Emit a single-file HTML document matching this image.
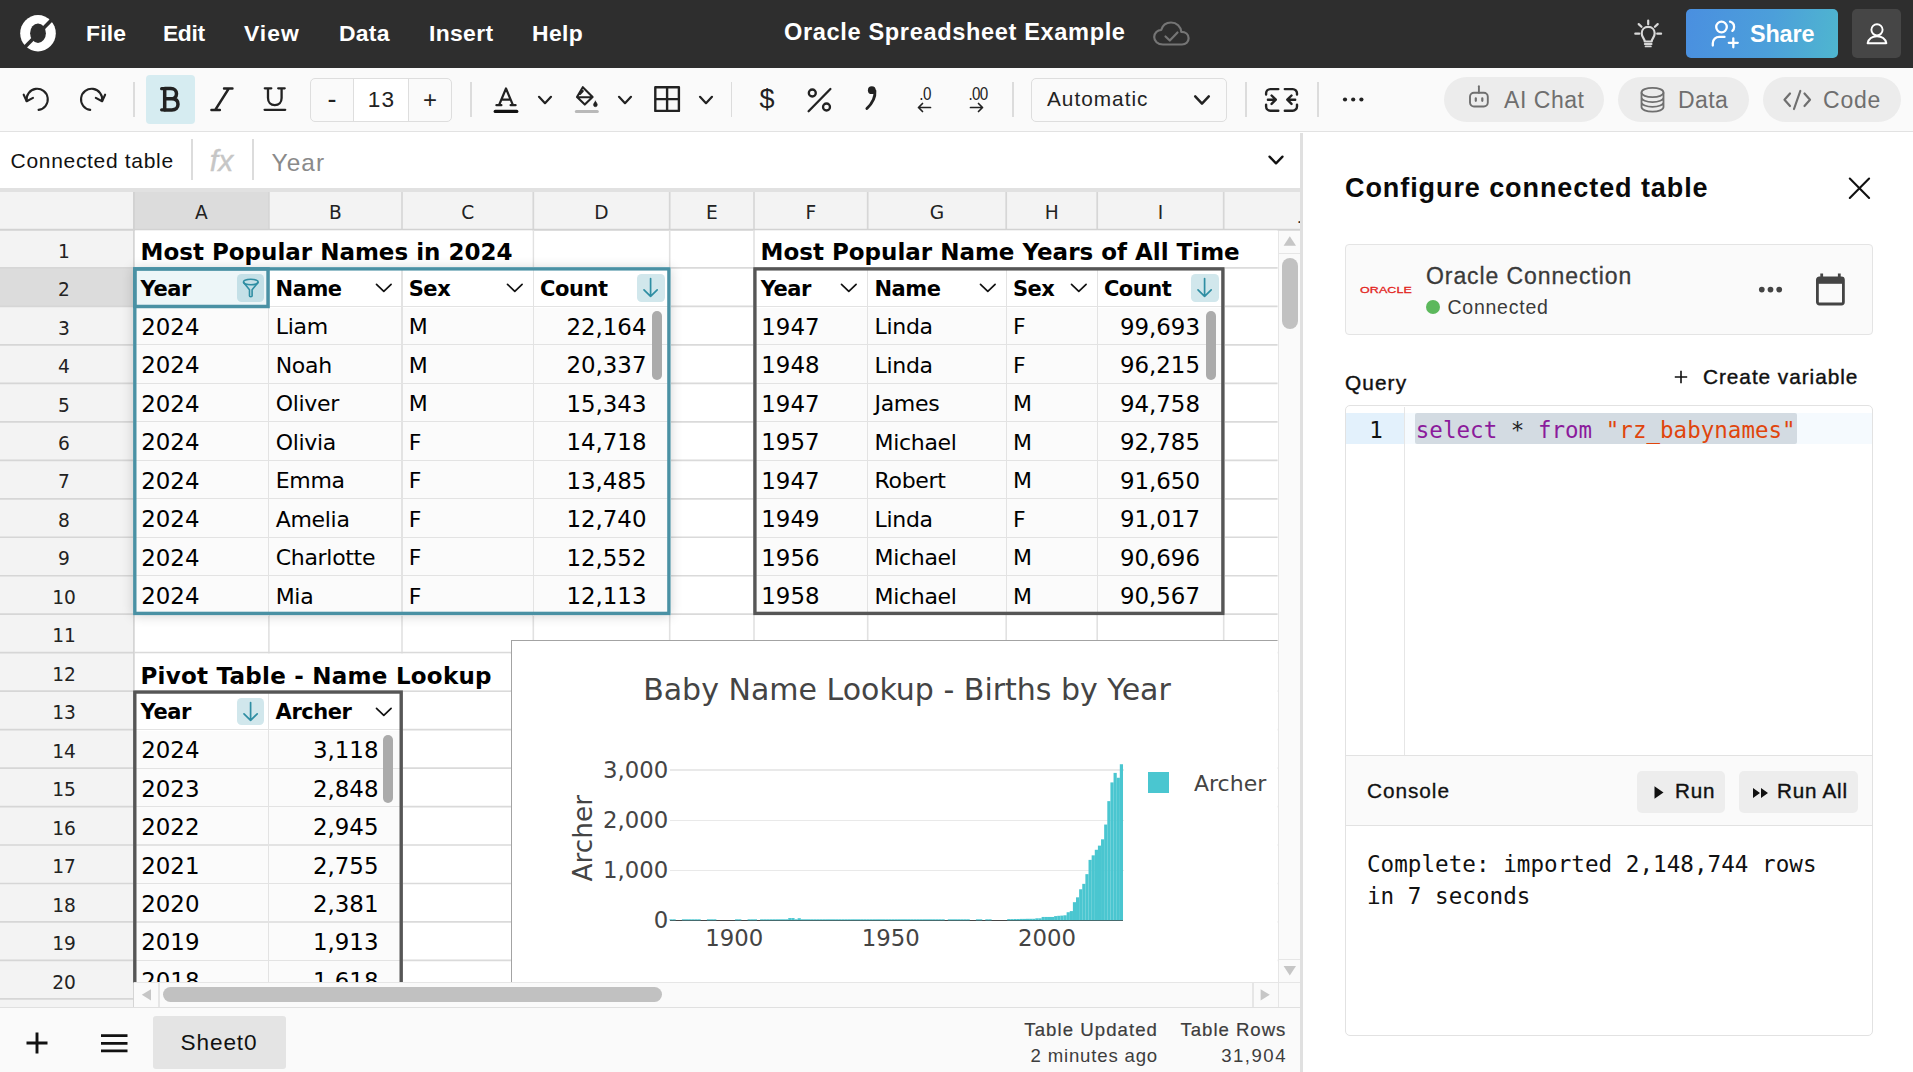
<!DOCTYPE html>
<html lang="en"><head><meta charset="utf-8"><title>Oracle Spreadsheet Example</title>
<style>
*{box-sizing:border-box;margin:0;padding:0}
html,body{width:1913px;height:1072px;overflow:hidden;background:#fff}
body{font-family:"DejaVu Sans","Liberation Sans",sans-serif;color:#111;position:relative}
.abs{position:absolute}
.t{position:absolute;white-space:pre;line-height:1}
svg{position:absolute;overflow:visible}
#topbar{position:absolute;left:0;top:0;width:1913px;height:68px;background:#2e2e2e}
#toolbar{position:absolute;left:0;top:68px;width:1913px;height:64px;background:#fafafa;border-bottom:1.5px solid #e2e2e2}
.menu{position:absolute;top:0;height:68px;line-height:66px;color:#fff;font-weight:700;font-size:19.2px}
.sep{position:absolute;top:14px;width:1.5px;height:35px;background:#dcdcdc}
.pill{position:absolute;top:9px;height:45px;border-radius:23px;background:#ececec;color:#6f6f6f;font-size:21px;line-height:45px}

</style></head><body>
<div id="topbar"><svg style="left:19.5px;top:14.5px;" width="36" height="36.5" viewBox="0 0 36 36.5" fill="none"><ellipse cx="18" cy="18.25" rx="17.8" ry="18.2" fill="#fff"/><ellipse cx="18" cy="18.2" rx="7.9" ry="9.7" fill="#2e2e2e"/><path d="M4.5 32.5 L31.5 5" stroke="#2e2e2e" stroke-width="3.6"/></svg><div class="t" style="left:86px;top:21.85px;font-family:'Liberation Sans','DejaVu Sans',sans-serif;font-size:22.9px;font-weight:700;color:#fff;letter-spacing:0.15px;">File</div><div class="t" style="left:163px;top:21.85px;font-family:'Liberation Sans','DejaVu Sans',sans-serif;font-size:22.9px;font-weight:700;color:#fff;letter-spacing:-0.4px;">Edit</div><div class="t" style="left:244px;top:21.85px;font-family:'Liberation Sans','DejaVu Sans',sans-serif;font-size:22.9px;font-weight:700;color:#fff;letter-spacing:1.0px;">View</div><div class="t" style="left:339px;top:21.85px;font-family:'Liberation Sans','DejaVu Sans',sans-serif;font-size:22.9px;font-weight:700;color:#fff;letter-spacing:0.25px;">Data</div><div class="t" style="left:429px;top:21.85px;font-family:'Liberation Sans','DejaVu Sans',sans-serif;font-size:22.9px;font-weight:700;color:#fff;letter-spacing:0.35px;">Insert</div><div class="t" style="left:532px;top:21.85px;font-family:'Liberation Sans','DejaVu Sans',sans-serif;font-size:22.9px;font-weight:700;color:#fff;letter-spacing:0.4px;">Help</div><div class="t" style="left:784px;top:21.40px;font-family:'Liberation Sans','DejaVu Sans',sans-serif;font-size:23.6px;font-weight:700;color:#fff;letter-spacing:0.63px;">Oracle Spreadsheet Example</div><svg style="left:1152px;top:20px;" width="40" height="28" viewBox="0 0 40 28" fill="none"><path d="M11 24.5 C5.5 24.5 2.2 21 2.2 17 C2.2 12.8 5.5 10 9.2 10 C10.5 5.5 14.3 2.5 19 2.5 C24.8 2.5 28.8 6.6 29.3 11.8 C33.5 11.8 36.6 14.4 36.6 18.2 C36.6 21.8 33.8 24.5 30 24.5 Z" stroke="#757575" stroke-width="2.2" stroke-linejoin="round"/><path d="M13.5 16.5 L17.8 20.5 L25.5 12.5" stroke="#757575" stroke-width="2.2" stroke-linecap="round" stroke-linejoin="round"/></svg><svg style="left:1632px;top:18px;" width="32" height="32" viewBox="0 0 32 32" fill="none"><g stroke="#d9d9d9" stroke-width="2.2" stroke-linecap="round" fill="none"><path d="M16.200 2.500v3.700M3.300 15.700h3.900M25.200 15.700h3.900M6.700 6.100l2.800 2.700M25.700 6.100l-2.800 2.700"/><path d="M12.700 23.500C12.700 20.500 9.700 19.400 9.700 15.300C9.700 11.500 12.500 8.900 16.200 8.900C19.900 8.900 22.700 11.500 22.700 15.300C22.700 19.400 19.700 20.500 19.700 23.500Z" stroke-linejoin="round"/><path d="M12.800 26h6.800M13.600 28.400h5.200" stroke-width="1.900"/></g></svg><div class="abs" style="left:1686px;top:9px;width:152px;height:49px;border-radius:5px;background:linear-gradient(100deg,#4a8fe0 0%,#4c9fda 55%,#4fb6cf 100%)"></div><svg style="left:1711px;top:19px;" width="30" height="30" viewBox="0 0 30 30" fill="none"><g stroke="#fff" stroke-width="2.3" stroke-linecap="round" fill="none"><circle cx="10.5" cy="8" r="5.3"/><path d="M1.8 26.5v-2.3c0-3.8 3-6.3 6.5-6.3h5.2"/><path d="M19 2.6c2.6.7 4.1 2.8 4.1 5.3 0 1.6-.6 3-1.7 4"/><path d="M22.3 19.3v9M17.8 23.8h9"/></g></svg><div class="t" style="left:1750px;top:22.50px;font-family:'Liberation Sans','DejaVu Sans',sans-serif;font-size:23.4px;font-weight:700;color:#fff;letter-spacing:-0.15px;">Share</div><div class="abs" style="left:1852px;top:9px;width:49px;height:49px;border-radius:5px;background:#464646"></div><svg style="left:1864px;top:21px;" width="26" height="26" viewBox="0 0 26 26" fill="none"><g stroke="#fff" stroke-width="1.9" fill="none" stroke-linejoin="round"><circle cx="13" cy="8.8" r="5.6"/><path d="M3.6 22.2c1.2-4.6 4.8-6.9 9.4-6.9s8.2 2.3 9.4 6.9z"/></g></svg></div><div id="toolbar"><svg style="left:0px;top:0px;" width="320" height="64" viewBox="0 0 320 64" fill="none"><g  stroke="#222" stroke-width="2.1" stroke-linecap="round" stroke-linejoin="round" fill="none"><path d="M26.7 33.0 A10.6 10.6 0 1 1 38.6 41.9"/><path d="M23.7 26.700000000000003 L26.7 33.2 L33.0 29.900000000000002"/></g><g transform="translate(183.6 0) scale(-1 1)" stroke="#222" stroke-width="2.1" stroke-linecap="round" stroke-linejoin="round" fill="none"><path d="M81.5 33.0 A10.6 10.6 0 1 1 93.39999999999999 41.9"/><path d="M78.5 26.700000000000003 L81.5 33.2 L87.8 29.900000000000002"/></g></svg><div class="sep" style="left:133px"></div><div class="abs" style="left:146px;top:7px;width:49px;height:49px;border-radius:4px;background:#d6ecf1"></div><svg style="left:0px;top:0px;" width="320" height="64" viewBox="0 0 320 64" fill="none"><g stroke="#222" stroke-linecap="round" stroke-linejoin="round" fill="none">
<path d="M161.6 20.7h3.2M161.600 41.800h3.200" stroke-width="3.2"/>
<path d="M164.7 20.6v21.3M164.7 20.6h6.2c3.4 0 5.6 2 5.6 5.1s-2.2 5.1-5.6 5.1h-6.2M170.9 30.8h1c3.8 0 6.1 2.1 6.1 5.5s-2.3 5.6-6.1 5.6h-7.2" stroke-width="3.5"/>
<path d="M224 20.5h8.5M211.4 42h8.5M228.8 20.5L215.2 42" stroke-width="2.4"/>
<path d="M264.8 20.3h6.5M278.2 20.3h6.5M268 20.3v9.8c0 4.4 2.7 7 6.8 7s6.8-2.6 6.8-7v-9.8M264.6 41.8h20.6" stroke-width="2.3"/>
</g></svg><div class="abs" style="left:310px;top:9.5px;width:142px;height:44.5px;border:1.3px solid #dedede;border-radius:5px;background:#fafafa"></div><div class="abs" style="left:353px;top:10.5px;width:56px;height:42.5px;background:#fff;border-left:1.3px solid #dedede;border-right:1.3px solid #dedede"></div><div class="t" style="left:-68px;width:800px;text-align:center;top:18.10px;font-family:'Liberation Sans','DejaVu Sans',sans-serif;font-size:27px;font-weight:400;color:#222;letter-spacing:0px;">-</div><div class="t" style="left:-18.5px;width:800px;text-align:center;top:20.50px;font-family:'Liberation Sans','DejaVu Sans',sans-serif;font-size:22.6px;font-weight:400;color:#222;letter-spacing:1.3px;">13</div><div class="t" style="left:30px;width:800px;text-align:center;top:20.00px;font-family:'Liberation Sans','DejaVu Sans',sans-serif;font-size:24px;font-weight:400;color:#222;letter-spacing:0px;">+</div><div class="sep" style="left:470px"></div><svg style="left:490px;top:14px;" width="34" height="40" viewBox="0 0 34 40" fill="none"><path d="M9 23.2 L16 6.5 L23 23.2 M11.7 17.6h8.6 M6.4 23.2h5 M20.6 23.2h5" stroke="#222" stroke-width="2.2" stroke-linecap="round" stroke-linejoin="round"/><path d="M5.2 29.4h21.6" stroke="#111" stroke-width="3.2" stroke-linecap="round"/></svg><svg style="left:534.8px;top:21.6px;" width="20" height="20" viewBox="0 0 20 20" fill="none"><path d="M4 6.8 L10 13.2 L16 6.8" stroke="#222" stroke-width="2.2" stroke-linecap="round" stroke-linejoin="round"/></svg><svg style="left:570px;top:14px;" width="34" height="40" viewBox="0 0 34 40" fill="none"><g stroke="#222" stroke-width="2.1" stroke-linejoin="round" stroke-linecap="round"><path d="M12.8 5.2 L22.6 15 L14.8 22.6 L7 15 Z M10 11.9 L12.8 9 M7.4 15.2h15"/><path d="M25.4 19.2c1.2 1.6 1.9 2.7 1.9 3.6a1.9 1.9 0 0 1-3.8 0c0-.9.7-2 1.9-3.6z" fill="#222" stroke-width="0.6"/></g><path d="M6.3 29.4h21" stroke="#b9b9b9" stroke-width="3" stroke-linecap="round"/></svg><svg style="left:615px;top:21.6px;" width="20" height="20" viewBox="0 0 20 20" fill="none"><path d="M4 6.8 L10 13.2 L16 6.8" stroke="#222" stroke-width="2.2" stroke-linecap="round" stroke-linejoin="round"/></svg><svg style="left:654px;top:18px;" width="27" height="27" viewBox="0 0 27 27" fill="none"><path d="M1.3 1.3h23.6v23.6H1.3z M13.1 1.3v23.6 M1.3 13.1h23.6" stroke="#222" stroke-width="2.4" stroke-linejoin="round"/></svg><svg style="left:696px;top:21.6px;" width="20" height="20" viewBox="0 0 20 20" fill="none"><path d="M4 6.8 L10 13.2 L16 6.8" stroke="#222" stroke-width="2.2" stroke-linecap="round" stroke-linejoin="round"/></svg><div class="sep" style="left:730.5px"></div><div class="t" style="left:367px;width:800px;text-align:center;top:18.10px;font-family:'Liberation Sans','DejaVu Sans',sans-serif;font-size:27px;font-weight:400;color:#222;letter-spacing:0px;">$</div><svg style="left:805px;top:17px;" width="30" height="30" viewBox="0 0 30 30" fill="none"><g stroke="#222" stroke-width="2.3" stroke-linecap="round" fill="none"><circle cx="7.3" cy="8" r="3.5"/><circle cx="21.5" cy="22" r="3.5"/><path d="M3.6 26.2 L25.4 4"/></g></svg><svg style="left:860px;top:16px;" width="24" height="32" viewBox="0 0 24 32" fill="none"><circle cx="11.800" cy="6.200" r="3.900" fill="#222"/><path d="M14.900 7c.6 6.500-2.600 12.300-8 17.500" stroke="#222" stroke-width="2.900" stroke-linecap="round" fill="none"/></svg><div class="t" style="left:524.5px;width:800px;text-align:center;top:15.50px;font-family:'Liberation Sans','DejaVu Sans',sans-serif;font-size:19px;font-weight:400;color:#222;letter-spacing:-0.8px;transform:scaleX(.8)">.0</div><div class="t" style="left:577.5px;width:800px;text-align:center;top:15.50px;font-family:'Liberation Sans','DejaVu Sans',sans-serif;font-size:19px;font-weight:400;color:#222;letter-spacing:-0.8px;transform:scaleX(.8)">.00</div><svg style="left:900px;top:30px;" width="100" height="20" viewBox="0 0 100 20" fill="none"><g stroke="#222" stroke-width="1.7" stroke-linecap="round" stroke-linejoin="round"><path d="M30.5 9.5h-12M22.5 5.5l-4 4 4 4"/><path d="M70.5 9.5h12M78.5 5.5l4 4-4 4"/></g></svg><div class="sep" style="left:1012px"></div><div class="abs" style="left:1031px;top:10px;width:196px;height:44px;border:1.3px solid #dedede;border-radius:5px;background:#fafafa"></div><div class="t" style="left:1047px;top:21.20px;font-family:'Liberation Sans','DejaVu Sans',sans-serif;font-size:20.8px;font-weight:400;color:#222;letter-spacing:1.0px;">Automatic</div><svg style="left:1191.5px;top:21.8px;" width="20" height="20" viewBox="0 0 20 20" fill="none"><path d="M3.2 6.4 L10 13.6 L16.8 6.4" stroke="#222" stroke-width="2.5" stroke-linecap="round" stroke-linejoin="round"/></svg><div class="sep" style="left:1245px"></div><svg style="left:1264px;top:18px;" width="36" height="28" viewBox="0 0 36 28" fill="none"><g stroke="#222" stroke-width="2.4" stroke-linecap="round" stroke-linejoin="round"><path d="M14.3 3.1H6.3a4.200 4.200 0 0 0-4.200 4.200V8.600M2.100 18.600V20.500a4.200 4.200 0 0 0 4.200 4.200H14.300M20.800 3.100H28.800a4.200 4.200 0 0 1 4.200 4.200V8.600M33 18.600V20.500a4.200 4.200 0 0 1-4.200 4.200H20.800"/><path d="M3.900 13.700H11.400M7.600 9.500l4.200 4.200-4.200 4.200M31.200 13.700H23.700M27.500 9.500l-4.200 4.200 4.200 4.200"/></g></svg><div class="sep" style="left:1317px"></div><svg style="left:1340px;top:27px;" width="28" height="10" viewBox="0 0 28 10" fill="none"><circle cx="5" cy="4.5" r="2.1" fill="#222"/><circle cx="13.2" cy="4.5" r="2.1" fill="#222"/><circle cx="21.4" cy="4.500" r="2.1" fill="#222"/></svg><div class="pill" style="left:1444px;width:160px"></div><svg style="left:1466px;top:15px;" width="28" height="28" viewBox="0 0 28 28" fill="none"><g stroke="#6f6f6f" stroke-width="1.9" stroke-linecap="round" fill="none"><rect x="4" y="9.800" width="17.800" height="13.700" rx="4"/><path d="M12.900 9.800V3.300"/><path d="M9.800 15.300v2.500M16.300 15.300v2.500" stroke-width="2.200"/></g></svg><div class="t" style="left:1504px;top:21.30px;font-family:'Liberation Sans','DejaVu Sans',sans-serif;font-size:23px;font-weight:400;color:#6f6f6f;letter-spacing:0.55px;">AI Chat</div><div class="pill" style="left:1618px;width:131px"></div><svg style="left:1640px;top:18px;" width="26" height="28" viewBox="0 0 26 28" fill="none"><g stroke="#6f6f6f" stroke-width="1.8" fill="none"><ellipse cx="12.500" cy="6.500" rx="11" ry="4.700"/><path d="M1.500 6.500v14.500c0 2.600 4.900 4.700 11 4.700s11-2.100 11-4.700V6.500M1.500 11.400c0 2.600 4.900 4.700 11 4.700s11-2.100 11-4.700M1.500 16.200c0 2.600 4.900 4.700 11 4.700s11-2.100 11-4.700"/></g></svg><div class="t" style="left:1678px;top:21.30px;font-family:'Liberation Sans','DejaVu Sans',sans-serif;font-size:23px;font-weight:400;color:#6f6f6f;letter-spacing:0.4px;">Data</div><div class="pill" style="left:1763px;width:138px"></div><svg style="left:1782px;top:20px;" width="32" height="24" viewBox="0 0 32 24" fill="none"><g stroke="#6f6f6f" stroke-width="2.2" stroke-linecap="round" stroke-linejoin="round" fill="none"><path d="M8 5.500L2.500 11.800 8 18M22.500 5.500l5.500 6.300-5.500 6.200M18.300 3L12 21"/></g></svg><div class="t" style="left:1823px;top:21.30px;font-family:'Liberation Sans','DejaVu Sans',sans-serif;font-size:23px;font-weight:400;color:#6f6f6f;letter-spacing:0.8px;">Code</div></div><div class="abs" style="left:0;top:132px;width:1300px;height:56px;background:#fff"></div><div class="t" style="left:10.6px;top:150.10px;font-family:'Liberation Sans','DejaVu Sans',sans-serif;font-size:21px;font-weight:400;color:#111;letter-spacing:0.68px;">Connected table</div><div class="abs" style="left:191px;top:139px;width:1.5px;height:41px;background:#dcdcdc"></div><div class="abs" style="left:252px;top:139px;width:1.5px;height:41px;background:#dcdcdc"></div><div class="t" style="left:-178.5px;width:800px;text-align:center;top:145.80px;font-family:'Liberation Sans','DejaVu Sans',sans-serif;font-size:30px;font-weight:400;color:#c6c6c6;letter-spacing:0px;font-style:italic;-webkit-text-stroke:0.4px #c6c6c6"><i>f</i>x</div><div class="t" style="left:271.6px;top:150.60px;font-family:'Liberation Sans','DejaVu Sans',sans-serif;font-size:24.4px;font-weight:400;color:#8a8a8a;letter-spacing:1.05px;">Year</div><svg style="left:1265.5px;top:150.3px;" width="20" height="20" viewBox="0 0 20 20" fill="none"><path d="M3.5 6.6 L10 13.4 L16.5 6.6" stroke="#111" stroke-width="2.3" stroke-linecap="round" stroke-linejoin="round"/></svg><div class="abs" style="left:0;top:187.6px;width:1300px;height:4.4px;background:#e1e1e1"></div><div class="abs" style="left:0;top:192px;width:1300px;height:38px;background:#f3f3f3"></div><div class="abs" style="left:0;top:230px;width:134px;height:777px;background:#f3f3f3"></div><svg style="left:0;top:0" width="1300" height="1007" viewBox="0 0 1300 1007"><rect x="133.90" y="192" width="135.00" height="37.5" fill="#dcdcdc"/><rect x="0" y="267.97" width="133.9" height="38.47" fill="#dcdcdc"/><path d="M133.90 192V230M268.90 192V230M402.00 192V230M533.30 192V230M669.70 192V230M754.00 192V230M867.70 192V230M1006.20 192V230M1097.20 192V230M1223.70 192V230M0 267.97H134M0 306.44H134M0 344.91H134M0 383.38H134M0 421.85H134M0 460.32H134M0 498.79H134M0 537.26H134M0 575.73H134M0 614.20H134M0 652.67H134M0 691.14H134M0 729.61H134M0 768.08H134M0 806.55H134M0 845.02H134M0 883.49H134M0 921.96H134M0 960.43H134M0 998.90H134" stroke="#d6d6d6" stroke-width="1.7" fill="none"/><path d="M0 229.7H1300" stroke="#d2d2d2" stroke-width="1.9" fill="none"/><path d="M133.9 192V1007" stroke="#d2d2d2" stroke-width="1.6" fill="none"/></svg><div class="t" style="left:-198.60000000000002px;width:800px;text-align:center;top:203.80px;font-family:'DejaVu Sans','Liberation Sans',sans-serif;font-size:18.6px;font-weight:400;color:#222;letter-spacing:0px;">A</div><div class="t" style="left:-64.55000000000001px;width:800px;text-align:center;top:203.80px;font-family:'DejaVu Sans','Liberation Sans',sans-serif;font-size:18.6px;font-weight:400;color:#222;letter-spacing:0px;">B</div><div class="t" style="left:67.64999999999998px;width:800px;text-align:center;top:203.80px;font-family:'DejaVu Sans','Liberation Sans',sans-serif;font-size:18.6px;font-weight:400;color:#222;letter-spacing:0px;">C</div><div class="t" style="left:201.5px;width:800px;text-align:center;top:203.80px;font-family:'DejaVu Sans','Liberation Sans',sans-serif;font-size:18.6px;font-weight:400;color:#222;letter-spacing:0px;">D</div><div class="t" style="left:311.85px;width:800px;text-align:center;top:203.80px;font-family:'DejaVu Sans','Liberation Sans',sans-serif;font-size:18.6px;font-weight:400;color:#222;letter-spacing:0px;">E</div><div class="t" style="left:410.85px;width:800px;text-align:center;top:203.80px;font-family:'DejaVu Sans','Liberation Sans',sans-serif;font-size:18.6px;font-weight:400;color:#222;letter-spacing:0px;">F</div><div class="t" style="left:536.95px;width:800px;text-align:center;top:203.80px;font-family:'DejaVu Sans','Liberation Sans',sans-serif;font-size:18.6px;font-weight:400;color:#222;letter-spacing:0px;">G</div><div class="t" style="left:651.7px;width:800px;text-align:center;top:203.80px;font-family:'DejaVu Sans','Liberation Sans',sans-serif;font-size:18.6px;font-weight:400;color:#222;letter-spacing:0px;">H</div><div class="t" style="left:760.45px;width:800px;text-align:center;top:203.80px;font-family:'DejaVu Sans','Liberation Sans',sans-serif;font-size:18.6px;font-weight:400;color:#222;letter-spacing:0px;">I</div><div class="abs" style="left:1290px;top:192px;width:10px;height:38px;overflow:hidden"><div class="t" style="left:9.6px;top:11.80px;font-family:'DejaVu Sans','Liberation Sans',sans-serif;font-size:18.6px;font-weight:400;color:#222;letter-spacing:0px;">J</div></div><div class="t" style="left:-336px;width:800px;text-align:center;top:242.63px;font-family:'DejaVu Sans','Liberation Sans',sans-serif;font-size:18.6px;font-weight:400;color:#222;letter-spacing:0px;">1</div><div class="t" style="left:-336px;width:800px;text-align:center;top:281.11px;font-family:'DejaVu Sans','Liberation Sans',sans-serif;font-size:18.6px;font-weight:400;color:#222;letter-spacing:0px;">2</div><div class="t" style="left:-336px;width:800px;text-align:center;top:319.57px;font-family:'DejaVu Sans','Liberation Sans',sans-serif;font-size:18.6px;font-weight:400;color:#222;letter-spacing:0px;">3</div><div class="t" style="left:-336px;width:800px;text-align:center;top:358.04px;font-family:'DejaVu Sans','Liberation Sans',sans-serif;font-size:18.6px;font-weight:400;color:#222;letter-spacing:0px;">4</div><div class="t" style="left:-336px;width:800px;text-align:center;top:396.51px;font-family:'DejaVu Sans','Liberation Sans',sans-serif;font-size:18.6px;font-weight:400;color:#222;letter-spacing:0px;">5</div><div class="t" style="left:-336px;width:800px;text-align:center;top:434.99px;font-family:'DejaVu Sans','Liberation Sans',sans-serif;font-size:18.6px;font-weight:400;color:#222;letter-spacing:0px;">6</div><div class="t" style="left:-336px;width:800px;text-align:center;top:473.45px;font-family:'DejaVu Sans','Liberation Sans',sans-serif;font-size:18.6px;font-weight:400;color:#222;letter-spacing:0px;">7</div><div class="t" style="left:-336px;width:800px;text-align:center;top:511.93px;font-family:'DejaVu Sans','Liberation Sans',sans-serif;font-size:18.6px;font-weight:400;color:#222;letter-spacing:0px;">8</div><div class="t" style="left:-336px;width:800px;text-align:center;top:550.40px;font-family:'DejaVu Sans','Liberation Sans',sans-serif;font-size:18.6px;font-weight:400;color:#222;letter-spacing:0px;">9</div><div class="t" style="left:-336px;width:800px;text-align:center;top:588.87px;font-family:'DejaVu Sans','Liberation Sans',sans-serif;font-size:18.6px;font-weight:400;color:#222;letter-spacing:0px;">10</div><div class="t" style="left:-336px;width:800px;text-align:center;top:627.34px;font-family:'DejaVu Sans','Liberation Sans',sans-serif;font-size:18.6px;font-weight:400;color:#222;letter-spacing:0px;">11</div><div class="t" style="left:-336px;width:800px;text-align:center;top:665.81px;font-family:'DejaVu Sans','Liberation Sans',sans-serif;font-size:18.6px;font-weight:400;color:#222;letter-spacing:0px;">12</div><div class="t" style="left:-336px;width:800px;text-align:center;top:704.28px;font-family:'DejaVu Sans','Liberation Sans',sans-serif;font-size:18.6px;font-weight:400;color:#222;letter-spacing:0px;">13</div><div class="t" style="left:-336px;width:800px;text-align:center;top:742.75px;font-family:'DejaVu Sans','Liberation Sans',sans-serif;font-size:18.6px;font-weight:400;color:#222;letter-spacing:0px;">14</div><div class="t" style="left:-336px;width:800px;text-align:center;top:781.22px;font-family:'DejaVu Sans','Liberation Sans',sans-serif;font-size:18.6px;font-weight:400;color:#222;letter-spacing:0px;">15</div><div class="t" style="left:-336px;width:800px;text-align:center;top:819.69px;font-family:'DejaVu Sans','Liberation Sans',sans-serif;font-size:18.6px;font-weight:400;color:#222;letter-spacing:0px;">16</div><div class="t" style="left:-336px;width:800px;text-align:center;top:858.16px;font-family:'DejaVu Sans','Liberation Sans',sans-serif;font-size:18.6px;font-weight:400;color:#222;letter-spacing:0px;">17</div><div class="t" style="left:-336px;width:800px;text-align:center;top:896.63px;font-family:'DejaVu Sans','Liberation Sans',sans-serif;font-size:18.6px;font-weight:400;color:#222;letter-spacing:0px;">18</div><div class="t" style="left:-336px;width:800px;text-align:center;top:935.10px;font-family:'DejaVu Sans','Liberation Sans',sans-serif;font-size:18.6px;font-weight:400;color:#222;letter-spacing:0px;">19</div><div class="t" style="left:-336px;width:800px;text-align:center;top:973.57px;font-family:'DejaVu Sans','Liberation Sans',sans-serif;font-size:18.6px;font-weight:400;color:#222;letter-spacing:0px;">20</div><div class="abs" id="grid" style="left:0;top:0;width:1277.6px;height:982.6px;overflow:hidden;clip-path:inset(192px 0 0 0)"><svg style="left:0;top:0" width="1300" height="1000" viewBox="0 0 1300 1000"><path d="M268.90 230V1000M402.00 230V1000M533.30 230V1000M669.70 230V1000M754.00 230V1000M867.70 230V1000M1006.20 230V1000M1097.20 230V1000M1223.70 230V1000M1360.00 230V1000" stroke="#e1e1e1" stroke-width="1.6" fill="none"/><path d="M134 267.97H1290M134 306.44H1290M134 344.91H1290M134 383.38H1290M134 421.85H1290M134 460.32H1290M134 498.79H1290M134 537.26H1290M134 575.73H1290M134 614.20H1290M134 652.67H1290M134 691.14H1290M134 729.61H1290M134 768.08H1290M134 806.55H1290M134 845.02H1290M134 883.49H1290M134 921.96H1290M134 960.43H1290M134 998.90H1290" stroke="#dadada" stroke-width="1.7" fill="none"/></svg><svg style="left:0;top:0" width="1300" height="1000"><rect x="135" y="230.40" width="397.4" height="36.67" fill="#fff"/></svg><svg style="left:0;top:0" width="1300" height="1000"><rect x="755" y="230.40" width="535" height="36.67" fill="#fff"/></svg><svg style="left:0;top:0" width="1300" height="1000"><rect x="135" y="653.57" width="375" height="36.67" fill="#fff"/></svg><div class="t" style="left:140.5px;top:241.20px;font-family:'DejaVu Sans','Liberation Sans',sans-serif;font-size:23px;font-weight:700;color:#000;letter-spacing:0px;">Most Popular Names in 2024</div><div class="t" style="left:760.5px;top:241.20px;font-family:'DejaVu Sans','Liberation Sans',sans-serif;font-size:23px;font-weight:700;color:#000;letter-spacing:0px;">Most Popular Name Years of All Time</div><div class="t" style="left:140.5px;top:665.20px;font-family:'DejaVu Sans','Liberation Sans',sans-serif;font-size:23px;font-weight:700;color:#000;letter-spacing:0.25px;">Pivot Table - Name Lookup</div><div class="abs" style="left:753.20px;top:267.17px;width:471.40px;height:347.93px;background:#fbfbfb;"></div><div class="abs" style="left:754.0px;top:269.37px;width:469.70000000000005px;height:38.47px;background:#fff"></div><div class="abs" style="left:754.0px;top:305.89px;width:469.70000000000005px;height:1.1px;background:#e3e3e3"></div><div class="abs" style="left:754.0px;top:344.36px;width:469.70000000000005px;height:1.1px;background:#e3e3e3"></div><div class="abs" style="left:754.0px;top:382.83px;width:469.70000000000005px;height:1.1px;background:#e3e3e3"></div><div class="abs" style="left:754.0px;top:421.30px;width:469.70000000000005px;height:1.1px;background:#e3e3e3"></div><div class="abs" style="left:754.0px;top:459.77px;width:469.70000000000005px;height:1.1px;background:#e3e3e3"></div><div class="abs" style="left:754.0px;top:498.24px;width:469.70000000000005px;height:1.1px;background:#e3e3e3"></div><div class="abs" style="left:754.0px;top:536.71px;width:469.70000000000005px;height:1.1px;background:#e3e3e3"></div><div class="abs" style="left:754.0px;top:575.18px;width:469.70000000000005px;height:1.1px;background:#e3e3e3"></div><div class="abs" style="left:867.15px;top:269.37px;width:1.1px;height:346.23px;background:#e3e3e3"></div><div class="abs" style="left:1005.65px;top:269.37px;width:1.1px;height:346.23px;background:#e3e3e3"></div><div class="abs" style="left:1096.65px;top:269.37px;width:1.1px;height:346.23px;background:#e3e3e3"></div><div class="t" style="left:760.7px;top:278.71px;font-family:'DejaVu Sans','Liberation Sans',sans-serif;font-size:21px;font-weight:700;color:#000;letter-spacing:-0.45px;">Year</div><svg style="left:835.3000000000001px;top:274.37px;" width="27.6" height="27.6" viewBox="0 0 27.6 27.6" fill="none"><path d="M6.5 10.3l7.300 7 7.300-7" stroke="#111" stroke-width="1.7" stroke-linecap="round" stroke-linejoin="round"/></svg><div class="t" style="left:874.4000000000001px;top:278.71px;font-family:'DejaVu Sans','Liberation Sans',sans-serif;font-size:21px;font-weight:700;color:#000;letter-spacing:-0.45px;">Name</div><svg style="left:973.8000000000001px;top:274.37px;" width="27.6" height="27.6" viewBox="0 0 27.6 27.6" fill="none"><path d="M6.5 10.3l7.300 7 7.300-7" stroke="#111" stroke-width="1.7" stroke-linecap="round" stroke-linejoin="round"/></svg><div class="t" style="left:1012.9000000000001px;top:278.71px;font-family:'DejaVu Sans','Liberation Sans',sans-serif;font-size:21px;font-weight:700;color:#000;letter-spacing:-0.45px;">Sex</div><svg style="left:1064.8px;top:274.37px;" width="27.6" height="27.6" viewBox="0 0 27.6 27.6" fill="none"><path d="M6.5 10.3l7.300 7 7.300-7" stroke="#111" stroke-width="1.7" stroke-linecap="round" stroke-linejoin="round"/></svg><div class="t" style="left:1103.9px;top:278.71px;font-family:'DejaVu Sans','Liberation Sans',sans-serif;font-size:21px;font-weight:700;color:#000;letter-spacing:-0.45px;">Count</div><div class="abs" style="left:1191.3px;top:274.37px;width:27.6px;height:27.6px;border-radius:4.5px;background:#d1e7ec"></div><svg style="left:1191.3px;top:274.37px;" width="27.6" height="27.6" viewBox="0 0 27.6 27.6" fill="none"><path d="M13.6 4.5V22.3M7 15.8l6.6 6.6 6.6-6.6" stroke="#2f8ea3" stroke-width="1.7" stroke-linecap="round" stroke-linejoin="round"/></svg><div class="t" style="left:761.3px;top:315.93px;font-family:'DejaVu Sans','Liberation Sans',sans-serif;font-size:22.9px;font-weight:400;color:#000;letter-spacing:0px;">1947</div><div class="t" style="left:874.5px;top:316.38px;font-family:'DejaVu Sans','Liberation Sans',sans-serif;font-size:22px;font-weight:400;color:#000;letter-spacing:-0.3px;">Linda</div><div class="t" style="left:1013.0px;top:316.38px;font-family:'DejaVu Sans','Liberation Sans',sans-serif;font-size:22px;font-weight:400;color:#000;letter-spacing:-0.3px;">F</div><div class="t" style="left:400.0px;width:800px;text-align:right;top:315.93px;font-family:'DejaVu Sans','Liberation Sans',sans-serif;font-size:22.9px;font-weight:400;color:#000;letter-spacing:0px;">99,693</div><div class="t" style="left:761.3px;top:354.40px;font-family:'DejaVu Sans','Liberation Sans',sans-serif;font-size:22.9px;font-weight:400;color:#000;letter-spacing:0px;">1948</div><div class="t" style="left:874.5px;top:354.85px;font-family:'DejaVu Sans','Liberation Sans',sans-serif;font-size:22px;font-weight:400;color:#000;letter-spacing:-0.3px;">Linda</div><div class="t" style="left:1013.0px;top:354.85px;font-family:'DejaVu Sans','Liberation Sans',sans-serif;font-size:22px;font-weight:400;color:#000;letter-spacing:-0.3px;">F</div><div class="t" style="left:400.0px;width:800px;text-align:right;top:354.40px;font-family:'DejaVu Sans','Liberation Sans',sans-serif;font-size:22.9px;font-weight:400;color:#000;letter-spacing:0px;">96,215</div><div class="t" style="left:761.3px;top:392.87px;font-family:'DejaVu Sans','Liberation Sans',sans-serif;font-size:22.9px;font-weight:400;color:#000;letter-spacing:0px;">1947</div><div class="t" style="left:874.5px;top:393.31px;font-family:'DejaVu Sans','Liberation Sans',sans-serif;font-size:22px;font-weight:400;color:#000;letter-spacing:-0.3px;">James</div><div class="t" style="left:1013.0px;top:393.31px;font-family:'DejaVu Sans','Liberation Sans',sans-serif;font-size:22px;font-weight:400;color:#000;letter-spacing:-0.3px;">M</div><div class="t" style="left:400.0px;width:800px;text-align:right;top:392.87px;font-family:'DejaVu Sans','Liberation Sans',sans-serif;font-size:22.9px;font-weight:400;color:#000;letter-spacing:0px;">94,758</div><div class="t" style="left:761.3px;top:431.34px;font-family:'DejaVu Sans','Liberation Sans',sans-serif;font-size:22.9px;font-weight:400;color:#000;letter-spacing:0px;">1957</div><div class="t" style="left:874.5px;top:431.79px;font-family:'DejaVu Sans','Liberation Sans',sans-serif;font-size:22px;font-weight:400;color:#000;letter-spacing:-0.3px;">Michael</div><div class="t" style="left:1013.0px;top:431.79px;font-family:'DejaVu Sans','Liberation Sans',sans-serif;font-size:22px;font-weight:400;color:#000;letter-spacing:-0.3px;">M</div><div class="t" style="left:400.0px;width:800px;text-align:right;top:431.34px;font-family:'DejaVu Sans','Liberation Sans',sans-serif;font-size:22.9px;font-weight:400;color:#000;letter-spacing:0px;">92,785</div><div class="t" style="left:761.3px;top:469.81px;font-family:'DejaVu Sans','Liberation Sans',sans-serif;font-size:22.9px;font-weight:400;color:#000;letter-spacing:0px;">1947</div><div class="t" style="left:874.5px;top:470.26px;font-family:'DejaVu Sans','Liberation Sans',sans-serif;font-size:22px;font-weight:400;color:#000;letter-spacing:-0.3px;">Robert</div><div class="t" style="left:1013.0px;top:470.26px;font-family:'DejaVu Sans','Liberation Sans',sans-serif;font-size:22px;font-weight:400;color:#000;letter-spacing:-0.3px;">M</div><div class="t" style="left:400.0px;width:800px;text-align:right;top:469.81px;font-family:'DejaVu Sans','Liberation Sans',sans-serif;font-size:22.9px;font-weight:400;color:#000;letter-spacing:0px;">91,650</div><div class="t" style="left:761.3px;top:508.27px;font-family:'DejaVu Sans','Liberation Sans',sans-serif;font-size:22.9px;font-weight:400;color:#000;letter-spacing:0px;">1949</div><div class="t" style="left:874.5px;top:508.72px;font-family:'DejaVu Sans','Liberation Sans',sans-serif;font-size:22px;font-weight:400;color:#000;letter-spacing:-0.3px;">Linda</div><div class="t" style="left:1013.0px;top:508.72px;font-family:'DejaVu Sans','Liberation Sans',sans-serif;font-size:22px;font-weight:400;color:#000;letter-spacing:-0.3px;">F</div><div class="t" style="left:400.0px;width:800px;text-align:right;top:508.27px;font-family:'DejaVu Sans','Liberation Sans',sans-serif;font-size:22.9px;font-weight:400;color:#000;letter-spacing:0px;">91,017</div><div class="t" style="left:761.3px;top:546.74px;font-family:'DejaVu Sans','Liberation Sans',sans-serif;font-size:22.9px;font-weight:400;color:#000;letter-spacing:0px;">1956</div><div class="t" style="left:874.5px;top:547.19px;font-family:'DejaVu Sans','Liberation Sans',sans-serif;font-size:22px;font-weight:400;color:#000;letter-spacing:-0.3px;">Michael</div><div class="t" style="left:1013.0px;top:547.19px;font-family:'DejaVu Sans','Liberation Sans',sans-serif;font-size:22px;font-weight:400;color:#000;letter-spacing:-0.3px;">M</div><div class="t" style="left:400.0px;width:800px;text-align:right;top:546.74px;font-family:'DejaVu Sans','Liberation Sans',sans-serif;font-size:22.9px;font-weight:400;color:#000;letter-spacing:0px;">90,696</div><div class="t" style="left:761.3px;top:585.21px;font-family:'DejaVu Sans','Liberation Sans',sans-serif;font-size:22.9px;font-weight:400;color:#000;letter-spacing:0px;">1958</div><div class="t" style="left:874.5px;top:585.66px;font-family:'DejaVu Sans','Liberation Sans',sans-serif;font-size:22px;font-weight:400;color:#000;letter-spacing:-0.3px;">Michael</div><div class="t" style="left:1013.0px;top:585.66px;font-family:'DejaVu Sans','Liberation Sans',sans-serif;font-size:22px;font-weight:400;color:#000;letter-spacing:-0.3px;">M</div><div class="t" style="left:400.0px;width:800px;text-align:right;top:585.21px;font-family:'DejaVu Sans','Liberation Sans',sans-serif;font-size:22.9px;font-weight:400;color:#000;letter-spacing:0px;">90,567</div><div class="abs" style="left:1206px;top:311px;width:9.5px;height:69px;border-radius:5px;background:#ababab"></div><svg style="left:0;top:0" width="1300" height="1100"><rect x="754.90" y="268.87" width="468.00" height="344.53" stroke="#565656" stroke-width="3.4" fill="none"/></svg><div class="abs" style="left:133.10px;top:690.34px;width:269.80px;height:347.93px;background:#fbfbfb;"></div><div class="abs" style="left:133.9px;top:692.54px;width:268.1px;height:38.47px;background:#fff"></div><div class="abs" style="left:133.9px;top:729.06px;width:268.1px;height:1.1px;background:#e3e3e3"></div><div class="abs" style="left:133.9px;top:767.53px;width:268.1px;height:1.1px;background:#e3e3e3"></div><div class="abs" style="left:133.9px;top:806.00px;width:268.1px;height:1.1px;background:#e3e3e3"></div><div class="abs" style="left:133.9px;top:844.47px;width:268.1px;height:1.1px;background:#e3e3e3"></div><div class="abs" style="left:133.9px;top:882.94px;width:268.1px;height:1.1px;background:#e3e3e3"></div><div class="abs" style="left:133.9px;top:921.41px;width:268.1px;height:1.1px;background:#e3e3e3"></div><div class="abs" style="left:133.9px;top:959.88px;width:268.1px;height:1.1px;background:#e3e3e3"></div><div class="abs" style="left:133.9px;top:998.35px;width:268.1px;height:1.1px;background:#e3e3e3"></div><div class="abs" style="left:268.35px;top:692.54px;width:1.1px;height:346.23px;background:#e3e3e3"></div><div class="t" style="left:140.6px;top:701.88px;font-family:'DejaVu Sans','Liberation Sans',sans-serif;font-size:21px;font-weight:700;color:#000;letter-spacing:-0.45px;">Year</div><div class="abs" style="left:236.5px;top:697.54px;width:27.6px;height:27.6px;border-radius:4.5px;background:#d1e7ec"></div><svg style="left:236.49999999999997px;top:697.54px;" width="27.6" height="27.6" viewBox="0 0 27.6 27.6" fill="none"><path d="M13.6 4.5V22.3M7 15.8l6.6 6.6 6.6-6.6" stroke="#2f8ea3" stroke-width="1.7" stroke-linecap="round" stroke-linejoin="round"/></svg><div class="t" style="left:275.59999999999997px;top:701.88px;font-family:'DejaVu Sans','Liberation Sans',sans-serif;font-size:21px;font-weight:700;color:#000;letter-spacing:-0.45px;">Archer</div><svg style="left:369.6px;top:697.54px;" width="27.6" height="27.6" viewBox="0 0 27.6 27.6" fill="none"><path d="M6.5 10.3l7.300 7 7.300-7" stroke="#111" stroke-width="1.7" stroke-linecap="round" stroke-linejoin="round"/></svg><div class="t" style="left:141.20000000000002px;top:739.09px;font-family:'DejaVu Sans','Liberation Sans',sans-serif;font-size:22.9px;font-weight:400;color:#000;letter-spacing:0px;">2024</div><div class="t" style="left:-421.5px;width:800px;text-align:right;top:739.09px;font-family:'DejaVu Sans','Liberation Sans',sans-serif;font-size:22.9px;font-weight:400;color:#000;letter-spacing:0px;">3,118</div><div class="t" style="left:141.20000000000002px;top:777.56px;font-family:'DejaVu Sans','Liberation Sans',sans-serif;font-size:22.9px;font-weight:400;color:#000;letter-spacing:0px;">2023</div><div class="t" style="left:-421.5px;width:800px;text-align:right;top:777.56px;font-family:'DejaVu Sans','Liberation Sans',sans-serif;font-size:22.9px;font-weight:400;color:#000;letter-spacing:0px;">2,848</div><div class="t" style="left:141.20000000000002px;top:816.03px;font-family:'DejaVu Sans','Liberation Sans',sans-serif;font-size:22.9px;font-weight:400;color:#000;letter-spacing:0px;">2022</div><div class="t" style="left:-421.5px;width:800px;text-align:right;top:816.03px;font-family:'DejaVu Sans','Liberation Sans',sans-serif;font-size:22.9px;font-weight:400;color:#000;letter-spacing:0px;">2,945</div><div class="t" style="left:141.20000000000002px;top:854.50px;font-family:'DejaVu Sans','Liberation Sans',sans-serif;font-size:22.9px;font-weight:400;color:#000;letter-spacing:0px;">2021</div><div class="t" style="left:-421.5px;width:800px;text-align:right;top:854.50px;font-family:'DejaVu Sans','Liberation Sans',sans-serif;font-size:22.9px;font-weight:400;color:#000;letter-spacing:0px;">2,755</div><div class="t" style="left:141.20000000000002px;top:892.97px;font-family:'DejaVu Sans','Liberation Sans',sans-serif;font-size:22.9px;font-weight:400;color:#000;letter-spacing:0px;">2020</div><div class="t" style="left:-421.5px;width:800px;text-align:right;top:892.97px;font-family:'DejaVu Sans','Liberation Sans',sans-serif;font-size:22.9px;font-weight:400;color:#000;letter-spacing:0px;">2,381</div><div class="t" style="left:141.20000000000002px;top:931.44px;font-family:'DejaVu Sans','Liberation Sans',sans-serif;font-size:22.9px;font-weight:400;color:#000;letter-spacing:0px;">2019</div><div class="t" style="left:-421.5px;width:800px;text-align:right;top:931.44px;font-family:'DejaVu Sans','Liberation Sans',sans-serif;font-size:22.9px;font-weight:400;color:#000;letter-spacing:0px;">1,913</div><div class="t" style="left:141.20000000000002px;top:969.91px;font-family:'DejaVu Sans','Liberation Sans',sans-serif;font-size:22.9px;font-weight:400;color:#000;letter-spacing:0px;">2018</div><div class="t" style="left:-421.5px;width:800px;text-align:right;top:969.91px;font-family:'DejaVu Sans','Liberation Sans',sans-serif;font-size:22.9px;font-weight:400;color:#000;letter-spacing:0px;">1,618</div><div class="t" style="left:141.20000000000002px;top:1008.38px;font-family:'DejaVu Sans','Liberation Sans',sans-serif;font-size:22.9px;font-weight:400;color:#000;letter-spacing:0px;">2017</div><div class="t" style="left:-421.5px;width:800px;text-align:right;top:1008.38px;font-family:'DejaVu Sans','Liberation Sans',sans-serif;font-size:22.9px;font-weight:400;color:#000;letter-spacing:0px;">1,500</div><div class="abs" style="left:383px;top:735px;width:9.5px;height:68px;border-radius:5px;background:#ababab"></div><svg style="left:0;top:0" width="1300" height="1100"><rect x="134.80" y="692.04" width="266.40" height="344.53" stroke="#565656" stroke-width="3.4" fill="none"/></svg><div class="abs" style="left:133.10px;top:267.17px;width:537.50px;height:347.93px;background:#fbfbfb;box-shadow:0 1px 11px 0 rgba(0,0,0,.17);"></div><div class="abs" style="left:133.9px;top:269.37px;width:535.8000000000001px;height:38.47px;background:#fff"></div><div class="abs" style="left:133.9px;top:305.89px;width:535.8000000000001px;height:1.1px;background:#e3e3e3"></div><div class="abs" style="left:133.9px;top:344.36px;width:535.8000000000001px;height:1.1px;background:#e3e3e3"></div><div class="abs" style="left:133.9px;top:382.83px;width:535.8000000000001px;height:1.1px;background:#e3e3e3"></div><div class="abs" style="left:133.9px;top:421.30px;width:535.8000000000001px;height:1.1px;background:#e3e3e3"></div><div class="abs" style="left:133.9px;top:459.77px;width:535.8000000000001px;height:1.1px;background:#e3e3e3"></div><div class="abs" style="left:133.9px;top:498.24px;width:535.8000000000001px;height:1.1px;background:#e3e3e3"></div><div class="abs" style="left:133.9px;top:536.71px;width:535.8000000000001px;height:1.1px;background:#e3e3e3"></div><div class="abs" style="left:133.9px;top:575.18px;width:535.8000000000001px;height:1.1px;background:#e3e3e3"></div><div class="abs" style="left:268.35px;top:269.37px;width:1.1px;height:346.23px;background:#e3e3e3"></div><div class="abs" style="left:401.45px;top:269.37px;width:1.1px;height:346.23px;background:#e3e3e3"></div><div class="abs" style="left:532.75px;top:269.37px;width:1.1px;height:346.23px;background:#e3e3e3"></div><svg style="left:0;top:0" width="1300" height="1100"><rect x="134.85" y="268.92" width="133.20" height="37.57" stroke="#4a91a4" stroke-width="3.5" fill="#edf6f8"/></svg><div class="t" style="left:140.6px;top:278.71px;font-family:'DejaVu Sans','Liberation Sans',sans-serif;font-size:21px;font-weight:700;color:#000;letter-spacing:-0.45px;">Year</div><div class="abs" style="left:236.5px;top:274.37px;width:27.6px;height:27.6px;border-radius:4.5px;background:#c4e0e7"></div><svg style="left:236.49999999999997px;top:274.37px;" width="27.6" height="27.6" viewBox="0 0 27.6 27.6" fill="none"><g stroke="#2f8ea3" stroke-width="1.6" stroke-linejoin="round" stroke-linecap="round"><ellipse cx="13.8" cy="8" rx="7.3" ry="2.7"/><path d="M6.6 8.6l5.9 7.2v6.300c0 .8 2.6.8 2.600 0v-6.300l5.900-7.200"/></g></svg><div class="t" style="left:275.59999999999997px;top:278.71px;font-family:'DejaVu Sans','Liberation Sans',sans-serif;font-size:21px;font-weight:700;color:#000;letter-spacing:-0.45px;">Name</div><svg style="left:369.6px;top:274.37px;" width="27.6" height="27.6" viewBox="0 0 27.6 27.6" fill="none"><path d="M6.5 10.3l7.300 7 7.300-7" stroke="#111" stroke-width="1.7" stroke-linecap="round" stroke-linejoin="round"/></svg><div class="t" style="left:408.7px;top:278.71px;font-family:'DejaVu Sans','Liberation Sans',sans-serif;font-size:21px;font-weight:700;color:#000;letter-spacing:-0.45px;">Sex</div><svg style="left:500.9px;top:274.37px;" width="27.6" height="27.6" viewBox="0 0 27.6 27.6" fill="none"><path d="M6.5 10.3l7.300 7 7.300-7" stroke="#111" stroke-width="1.7" stroke-linecap="round" stroke-linejoin="round"/></svg><div class="t" style="left:540.0px;top:278.71px;font-family:'DejaVu Sans','Liberation Sans',sans-serif;font-size:21px;font-weight:700;color:#000;letter-spacing:-0.45px;">Count</div><div class="abs" style="left:637.3px;top:274.37px;width:27.6px;height:27.6px;border-radius:4.5px;background:#d1e7ec"></div><svg style="left:637.3000000000001px;top:274.37px;" width="27.6" height="27.6" viewBox="0 0 27.6 27.6" fill="none"><path d="M13.6 4.5V22.3M7 15.8l6.6 6.6 6.6-6.6" stroke="#2f8ea3" stroke-width="1.7" stroke-linecap="round" stroke-linejoin="round"/></svg><div class="t" style="left:141.20000000000002px;top:315.93px;font-family:'DejaVu Sans','Liberation Sans',sans-serif;font-size:22.9px;font-weight:400;color:#000;letter-spacing:0px;">2024</div><div class="t" style="left:275.7px;top:316.38px;font-family:'DejaVu Sans','Liberation Sans',sans-serif;font-size:22px;font-weight:400;color:#000;letter-spacing:-0.3px;">Liam</div><div class="t" style="left:408.8px;top:316.38px;font-family:'DejaVu Sans','Liberation Sans',sans-serif;font-size:22px;font-weight:400;color:#000;letter-spacing:-0.3px;">M</div><div class="t" style="left:-153.5px;width:800px;text-align:right;top:315.93px;font-family:'DejaVu Sans','Liberation Sans',sans-serif;font-size:22.9px;font-weight:400;color:#000;letter-spacing:0px;">22,164</div><div class="t" style="left:141.20000000000002px;top:354.40px;font-family:'DejaVu Sans','Liberation Sans',sans-serif;font-size:22.9px;font-weight:400;color:#000;letter-spacing:0px;">2024</div><div class="t" style="left:275.7px;top:354.85px;font-family:'DejaVu Sans','Liberation Sans',sans-serif;font-size:22px;font-weight:400;color:#000;letter-spacing:-0.3px;">Noah</div><div class="t" style="left:408.8px;top:354.85px;font-family:'DejaVu Sans','Liberation Sans',sans-serif;font-size:22px;font-weight:400;color:#000;letter-spacing:-0.3px;">M</div><div class="t" style="left:-153.5px;width:800px;text-align:right;top:354.40px;font-family:'DejaVu Sans','Liberation Sans',sans-serif;font-size:22.9px;font-weight:400;color:#000;letter-spacing:0px;">20,337</div><div class="t" style="left:141.20000000000002px;top:392.87px;font-family:'DejaVu Sans','Liberation Sans',sans-serif;font-size:22.9px;font-weight:400;color:#000;letter-spacing:0px;">2024</div><div class="t" style="left:275.7px;top:393.31px;font-family:'DejaVu Sans','Liberation Sans',sans-serif;font-size:22px;font-weight:400;color:#000;letter-spacing:-0.3px;">Oliver</div><div class="t" style="left:408.8px;top:393.31px;font-family:'DejaVu Sans','Liberation Sans',sans-serif;font-size:22px;font-weight:400;color:#000;letter-spacing:-0.3px;">M</div><div class="t" style="left:-153.5px;width:800px;text-align:right;top:392.87px;font-family:'DejaVu Sans','Liberation Sans',sans-serif;font-size:22.9px;font-weight:400;color:#000;letter-spacing:0px;">15,343</div><div class="t" style="left:141.20000000000002px;top:431.34px;font-family:'DejaVu Sans','Liberation Sans',sans-serif;font-size:22.9px;font-weight:400;color:#000;letter-spacing:0px;">2024</div><div class="t" style="left:275.7px;top:431.79px;font-family:'DejaVu Sans','Liberation Sans',sans-serif;font-size:22px;font-weight:400;color:#000;letter-spacing:-0.3px;">Olivia</div><div class="t" style="left:408.8px;top:431.79px;font-family:'DejaVu Sans','Liberation Sans',sans-serif;font-size:22px;font-weight:400;color:#000;letter-spacing:-0.3px;">F</div><div class="t" style="left:-153.5px;width:800px;text-align:right;top:431.34px;font-family:'DejaVu Sans','Liberation Sans',sans-serif;font-size:22.9px;font-weight:400;color:#000;letter-spacing:0px;">14,718</div><div class="t" style="left:141.20000000000002px;top:469.81px;font-family:'DejaVu Sans','Liberation Sans',sans-serif;font-size:22.9px;font-weight:400;color:#000;letter-spacing:0px;">2024</div><div class="t" style="left:275.7px;top:470.26px;font-family:'DejaVu Sans','Liberation Sans',sans-serif;font-size:22px;font-weight:400;color:#000;letter-spacing:-0.3px;">Emma</div><div class="t" style="left:408.8px;top:470.26px;font-family:'DejaVu Sans','Liberation Sans',sans-serif;font-size:22px;font-weight:400;color:#000;letter-spacing:-0.3px;">F</div><div class="t" style="left:-153.5px;width:800px;text-align:right;top:469.81px;font-family:'DejaVu Sans','Liberation Sans',sans-serif;font-size:22.9px;font-weight:400;color:#000;letter-spacing:0px;">13,485</div><div class="t" style="left:141.20000000000002px;top:508.27px;font-family:'DejaVu Sans','Liberation Sans',sans-serif;font-size:22.9px;font-weight:400;color:#000;letter-spacing:0px;">2024</div><div class="t" style="left:275.7px;top:508.72px;font-family:'DejaVu Sans','Liberation Sans',sans-serif;font-size:22px;font-weight:400;color:#000;letter-spacing:-0.3px;">Amelia</div><div class="t" style="left:408.8px;top:508.72px;font-family:'DejaVu Sans','Liberation Sans',sans-serif;font-size:22px;font-weight:400;color:#000;letter-spacing:-0.3px;">F</div><div class="t" style="left:-153.5px;width:800px;text-align:right;top:508.27px;font-family:'DejaVu Sans','Liberation Sans',sans-serif;font-size:22.9px;font-weight:400;color:#000;letter-spacing:0px;">12,740</div><div class="t" style="left:141.20000000000002px;top:546.74px;font-family:'DejaVu Sans','Liberation Sans',sans-serif;font-size:22.9px;font-weight:400;color:#000;letter-spacing:0px;">2024</div><div class="t" style="left:275.7px;top:547.19px;font-family:'DejaVu Sans','Liberation Sans',sans-serif;font-size:22px;font-weight:400;color:#000;letter-spacing:-0.3px;">Charlotte</div><div class="t" style="left:408.8px;top:547.19px;font-family:'DejaVu Sans','Liberation Sans',sans-serif;font-size:22px;font-weight:400;color:#000;letter-spacing:-0.3px;">F</div><div class="t" style="left:-153.5px;width:800px;text-align:right;top:546.74px;font-family:'DejaVu Sans','Liberation Sans',sans-serif;font-size:22.9px;font-weight:400;color:#000;letter-spacing:0px;">12,552</div><div class="t" style="left:141.20000000000002px;top:585.21px;font-family:'DejaVu Sans','Liberation Sans',sans-serif;font-size:22.9px;font-weight:400;color:#000;letter-spacing:0px;">2024</div><div class="t" style="left:275.7px;top:585.66px;font-family:'DejaVu Sans','Liberation Sans',sans-serif;font-size:22px;font-weight:400;color:#000;letter-spacing:-0.3px;">Mia</div><div class="t" style="left:408.8px;top:585.66px;font-family:'DejaVu Sans','Liberation Sans',sans-serif;font-size:22px;font-weight:400;color:#000;letter-spacing:-0.3px;">F</div><div class="t" style="left:-153.5px;width:800px;text-align:right;top:585.21px;font-family:'DejaVu Sans','Liberation Sans',sans-serif;font-size:22.9px;font-weight:400;color:#000;letter-spacing:0px;">12,113</div><div class="abs" style="left:652.3px;top:311px;width:9.7px;height:68.5px;border-radius:5px;background:#ababab"></div><svg style="left:0;top:0" width="1300" height="1100"><rect x="134.80" y="268.87" width="534.10" height="344.53" stroke="#4a91a4" stroke-width="3.4" fill="none"/></svg><div class="abs" style="left:511.3px;top:639.6px;width:800px;height:400px;background:#fff;border:1.3px solid #a3a3a3"></div><div class="t" style="left:507px;width:800px;text-align:center;top:674.60px;font-family:'DejaVu Sans','Liberation Sans',sans-serif;font-size:30px;font-weight:400;color:#444;letter-spacing:0px;">Baby Name Lookup - Births by Year</div><div class="abs" style="left:670px;top:869.55px;width:453.5px;height:1.6px;background:#e9e9e9"></div><div class="abs" style="left:670px;top:819.50px;width:453.5px;height:1.6px;background:#e9e9e9"></div><div class="abs" style="left:670px;top:769.45px;width:453.5px;height:1.6px;background:#e9e9e9"></div><div class="t" style="left:-131.79999999999995px;width:800px;text-align:right;top:909.10px;font-family:'DejaVu Sans','Liberation Sans',sans-serif;font-size:22.8px;font-weight:400;color:#444;letter-spacing:0px;">0</div><div class="t" style="left:-131.79999999999995px;width:800px;text-align:right;top:859.05px;font-family:'DejaVu Sans','Liberation Sans',sans-serif;font-size:22.8px;font-weight:400;color:#444;letter-spacing:0px;">1,000</div><div class="t" style="left:-131.79999999999995px;width:800px;text-align:right;top:809.00px;font-family:'DejaVu Sans','Liberation Sans',sans-serif;font-size:22.8px;font-weight:400;color:#444;letter-spacing:0px;">2,000</div><div class="t" style="left:-131.79999999999995px;width:800px;text-align:right;top:758.95px;font-family:'DejaVu Sans','Liberation Sans',sans-serif;font-size:22.8px;font-weight:400;color:#444;letter-spacing:0px;">3,000</div><div class="t" style="left:334.29999999999995px;width:800px;text-align:center;top:927.20px;font-family:'DejaVu Sans','Liberation Sans',sans-serif;font-size:22.8px;font-weight:400;color:#444;letter-spacing:0px;">1900</div><div class="t" style="left:490.69999999999993px;width:800px;text-align:center;top:927.20px;font-family:'DejaVu Sans','Liberation Sans',sans-serif;font-size:22.8px;font-weight:400;color:#444;letter-spacing:0px;">1950</div><div class="t" style="left:647.0999999999999px;width:800px;text-align:center;top:927.20px;font-family:'DejaVu Sans','Liberation Sans',sans-serif;font-size:22.8px;font-weight:400;color:#444;letter-spacing:0px;">2000</div><div class="abs" style="left:670px;top:919.8px;width:453px;height:1.2px;background:#444"></div><div class="t" style="left:482.5px;top:824.8px;width:200px;text-align:center;font-family:'DejaVu Sans','Liberation Sans',sans-serif;font-size:26.4px;color:#444;transform:rotate(-90deg)">Archer</div><div class="abs" style="left:1147.6px;top:772.4px;width:21px;height:20.6px;background:#4ac6d0"></div><div class="t" style="left:1194px;top:773.00px;font-family:'DejaVu Sans','Liberation Sans',sans-serif;font-size:22px;font-weight:400;color:#444;letter-spacing:0px;">Archer</div><svg style="left:670px;top:600px" width="460" height="330" viewBox="0 0 460 330"><g fill="#4ac6d0"><rect x="-0.62" y="319.30" width="3.2" height="1.00"/><rect x="2.50" y="319.30" width="3.2" height="1.00"/><rect x="11.89" y="319.30" width="3.2" height="1.00"/><rect x="15.02" y="319.30" width="3.2" height="1.00"/><rect x="18.14" y="319.30" width="3.2" height="1.00"/><rect x="21.27" y="319.30" width="3.2" height="1.00"/><rect x="24.40" y="319.30" width="3.2" height="1.00"/><rect x="27.53" y="319.30" width="3.2" height="1.00"/><rect x="36.91" y="319.30" width="3.2" height="1.00"/><rect x="40.04" y="319.30" width="3.2" height="1.00"/><rect x="43.17" y="319.30" width="3.2" height="1.00"/><rect x="65.06" y="319.30" width="3.2" height="1.00"/><rect x="68.19" y="319.30" width="3.2" height="1.00"/><rect x="77.58" y="319.30" width="3.2" height="1.00"/><rect x="80.70" y="319.30" width="3.2" height="1.00"/><rect x="83.83" y="319.30" width="3.2" height="1.00"/><rect x="90.09" y="319.30" width="3.2" height="1.00"/><rect x="93.22" y="319.30" width="3.2" height="1.00"/><rect x="96.34" y="319.30" width="3.2" height="1.00"/><rect x="99.47" y="319.30" width="3.2" height="1.00"/><rect x="102.60" y="319.30" width="3.2" height="1.00"/><rect x="105.73" y="319.30" width="3.2" height="1.00"/><rect x="108.86" y="319.30" width="3.2" height="1.00"/><rect x="111.98" y="319.30" width="3.2" height="1.00"/><rect x="115.11" y="319.30" width="3.2" height="1.00"/><rect x="118.24" y="318.05" width="3.2" height="2.25"/><rect x="121.37" y="318.05" width="3.2" height="2.25"/><rect x="124.50" y="319.30" width="3.2" height="1.00"/><rect x="127.62" y="318.20" width="3.2" height="2.10"/><rect x="130.75" y="319.30" width="3.2" height="1.00"/><rect x="133.88" y="319.30" width="3.2" height="1.00"/><rect x="137.01" y="319.30" width="3.2" height="1.00"/><rect x="140.14" y="319.30" width="3.2" height="1.00"/><rect x="143.26" y="319.30" width="3.2" height="1.00"/><rect x="146.39" y="319.30" width="3.2" height="1.00"/><rect x="149.52" y="319.30" width="3.2" height="1.00"/><rect x="152.65" y="319.30" width="3.2" height="1.00"/><rect x="155.78" y="319.30" width="3.2" height="1.00"/><rect x="158.90" y="319.30" width="3.2" height="1.00"/><rect x="162.03" y="319.30" width="3.2" height="1.00"/><rect x="165.16" y="319.30" width="3.2" height="1.00"/><rect x="168.29" y="319.30" width="3.2" height="1.00"/><rect x="171.42" y="319.30" width="3.2" height="1.00"/><rect x="174.54" y="319.30" width="3.2" height="1.00"/><rect x="177.67" y="319.30" width="3.2" height="1.00"/><rect x="180.80" y="319.30" width="3.2" height="1.00"/><rect x="183.93" y="319.30" width="3.2" height="1.00"/><rect x="187.06" y="319.30" width="3.2" height="1.00"/><rect x="190.18" y="319.30" width="3.2" height="1.00"/><rect x="193.31" y="319.30" width="3.2" height="1.00"/><rect x="196.44" y="319.30" width="3.2" height="1.00"/><rect x="199.57" y="319.30" width="3.2" height="1.00"/><rect x="202.70" y="319.30" width="3.2" height="1.00"/><rect x="205.82" y="319.30" width="3.2" height="1.00"/><rect x="208.95" y="319.30" width="3.2" height="1.00"/><rect x="212.08" y="319.30" width="3.2" height="1.00"/><rect x="215.21" y="319.30" width="3.2" height="1.00"/><rect x="218.34" y="319.30" width="3.2" height="1.00"/><rect x="221.46" y="319.30" width="3.2" height="1.00"/><rect x="224.59" y="319.30" width="3.2" height="1.00"/><rect x="227.72" y="319.30" width="3.2" height="1.00"/><rect x="230.85" y="319.30" width="3.2" height="1.00"/><rect x="233.98" y="319.30" width="3.2" height="1.00"/><rect x="237.10" y="319.30" width="3.2" height="1.00"/><rect x="240.23" y="319.30" width="3.2" height="1.00"/><rect x="243.36" y="319.30" width="3.2" height="1.00"/><rect x="246.49" y="319.30" width="3.2" height="1.00"/><rect x="249.62" y="319.30" width="3.2" height="1.00"/><rect x="252.74" y="319.30" width="3.2" height="1.00"/><rect x="255.87" y="319.30" width="3.2" height="1.00"/><rect x="259.00" y="319.30" width="3.2" height="1.00"/><rect x="262.13" y="319.30" width="3.2" height="1.00"/><rect x="265.26" y="319.30" width="3.2" height="1.00"/><rect x="268.38" y="319.30" width="3.2" height="1.00"/><rect x="271.51" y="319.30" width="3.2" height="1.00"/><rect x="277.77" y="319.30" width="3.2" height="1.00"/><rect x="280.90" y="319.30" width="3.2" height="1.00"/><rect x="284.02" y="319.30" width="3.2" height="1.00"/><rect x="287.15" y="319.30" width="3.2" height="1.00"/><rect x="290.28" y="319.30" width="3.2" height="1.00"/><rect x="293.41" y="319.30" width="3.2" height="1.00"/><rect x="296.54" y="319.30" width="3.2" height="1.00"/><rect x="305.92" y="319.30" width="3.2" height="1.00"/><rect x="309.05" y="319.30" width="3.2" height="1.00"/><rect x="315.30" y="319.30" width="3.2" height="1.00"/><rect x="318.43" y="319.30" width="3.2" height="1.00"/><rect x="337.20" y="319.10" width="3.2" height="1.20"/><rect x="340.33" y="319.10" width="3.2" height="1.20"/><rect x="343.46" y="319.00" width="3.2" height="1.30"/><rect x="346.58" y="319.00" width="3.2" height="1.30"/><rect x="349.71" y="318.90" width="3.2" height="1.40"/><rect x="352.84" y="318.90" width="3.2" height="1.40"/><rect x="355.97" y="318.80" width="3.2" height="1.50"/><rect x="359.10" y="318.80" width="3.2" height="1.50"/><rect x="362.22" y="318.80" width="3.2" height="1.50"/><rect x="365.35" y="318.30" width="3.2" height="2.00"/><rect x="368.48" y="318.30" width="3.2" height="2.00"/><rect x="371.61" y="316.95" width="3.2" height="3.35"/><rect x="374.74" y="316.95" width="3.2" height="3.35"/><rect x="377.86" y="316.95" width="3.2" height="3.35"/><rect x="380.99" y="316.95" width="3.2" height="3.35"/><rect x="384.12" y="316.10" width="3.2" height="4.20"/><rect x="387.25" y="315.80" width="3.2" height="4.50"/><rect x="390.38" y="315.60" width="3.2" height="4.70"/><rect x="393.50" y="315.29" width="3.2" height="5.00"/><rect x="396.63" y="312.24" width="3.2" height="8.06"/><rect x="399.76" y="311.09" width="3.2" height="9.21"/><rect x="402.89" y="302.18" width="3.2" height="18.12"/><rect x="406.02" y="297.33" width="3.2" height="22.97"/><rect x="409.14" y="289.27" width="3.2" height="31.03"/><rect x="412.27" y="283.86" width="3.2" height="36.44"/><rect x="415.40" y="274.15" width="3.2" height="46.15"/><rect x="418.53" y="259.89" width="3.2" height="60.41"/><rect x="421.66" y="255.34" width="3.2" height="64.96"/><rect x="424.78" y="249.78" width="3.2" height="70.52"/><rect x="427.91" y="245.63" width="3.2" height="74.67"/><rect x="431.04" y="239.32" width="3.2" height="80.98"/><rect x="434.17" y="224.55" width="3.2" height="95.75"/><rect x="437.30" y="201.13" width="3.2" height="119.17"/><rect x="440.42" y="182.41" width="3.2" height="137.89"/><rect x="443.55" y="172.90" width="3.2" height="147.40"/><rect x="446.68" y="177.76" width="3.2" height="142.54"/><rect x="449.81" y="164.24" width="3.2" height="156.06"/></g></svg></div><div class="abs" style="left:1277.6px;top:231px;width:22.4px;height:752px;background:#fafafa;border-left:1.3px solid #e6e6e6"></div><div class="abs" style="left:1278px;top:252.6px;width:22px;height:1.3px;background:#e6e6e6"></div><svg style="left:1278px;top:231px;" width="22" height="22" viewBox="0 0 22 22" fill="none"><path d="M11.8 5.2l6.2 9.6H5.600z" fill="#c6c6c6"/></svg><div class="abs" style="left:1282px;top:258.4px;width:16.2px;height:70.2px;border-radius:8.1px;background:#c1c1c1"></div><div class="abs" style="left:1278px;top:958.6px;width:22px;height:1.3px;background:#e6e6e6"></div><svg style="left:1278px;top:960px;" width="22" height="22" viewBox="0 0 22 22" fill="none"><path d="M11.8 15.600l6.200-9.600H5.600z" fill="#c6c6c6"/></svg><div class="abs" style="left:134px;top:982.4px;width:1166px;height:24.8px;background:#fafafa;border-top:1.3px solid #e6e6e6"></div><div class="abs" style="left:158.400px;top:983px;width:1.3px;height:24px;background:#e6e6e6"></div><div class="abs" style="left:1252.4px;top:983px;width:1.3px;height:24px;background:#e6e6e6"></div><div class="abs" style="left:1277.6px;top:983px;width:1.3px;height:24px;background:#e6e6e6"></div><svg style="left:136px;top:984px;" width="22" height="22" viewBox="0 0 22 22" fill="none"><path d="M5.800 10.800l9.200-5.600v11.200z" fill="#c6c6c6"/></svg><svg style="left:1254.4px;top:984px;" width="22" height="22" viewBox="0 0 22 22" fill="none"><path d="M15.800 10.800l-9.200-5.600v11.200z" fill="#c6c6c6"/></svg><div class="abs" style="left:163px;top:986.6px;width:499px;height:15.6px;border-radius:7.8px;background:#c1c1c1"></div><div class="abs" style="left:0;top:1006.6px;width:1300px;height:66px;background:#fafafa;border-top:1.5px solid #e0e0e0"></div><svg style="left:25px;top:1031px;" width="24" height="24" viewBox="0 0 24 24" fill="none"><path d="M12 1.500v21M1.500 12h21" stroke="#111" stroke-width="2.9"/></svg><svg style="left:100px;top:1031px;" width="28" height="24" viewBox="0 0 28 24" fill="none"><path d="M1 4.700h26.500M1 12.300h26.500M1 19.900h26.500" stroke="#111" stroke-width="2.7"/></svg><div class="abs" style="left:153px;top:1016px;width:133px;height:53px;border-radius:3px;background:#e4e4e4"></div><div class="t" style="left:-181px;width:800px;text-align:center;top:1031.70px;font-family:'Liberation Sans','DejaVu Sans',sans-serif;font-size:22.6px;font-weight:400;color:#111;letter-spacing:0.9px;">Sheet0</div><div class="t" style="left:358px;width:800px;text-align:right;top:1021.10px;font-family:'Liberation Sans','DejaVu Sans',sans-serif;font-size:18.6px;font-weight:400;color:#3d3d3d;letter-spacing:1.06px;-webkit-text-stroke:0.2px #3d3d3d">Table Updated</div><div class="t" style="left:358px;width:800px;text-align:right;top:1047.10px;font-family:'Liberation Sans','DejaVu Sans',sans-serif;font-size:18.6px;font-weight:400;color:#3d3d3d;letter-spacing:0.82px;">2 minutes ago</div><div class="t" style="left:486.4000000000001px;width:800px;text-align:right;top:1021.10px;font-family:'Liberation Sans','DejaVu Sans',sans-serif;font-size:18.6px;font-weight:400;color:#3d3d3d;letter-spacing:0.98px;-webkit-text-stroke:0.2px #3d3d3d">Table Rows</div><div class="t" style="left:487px;width:800px;text-align:right;top:1047.10px;font-family:'Liberation Sans','DejaVu Sans',sans-serif;font-size:18.6px;font-weight:400;color:#3d3d3d;letter-spacing:1.5px;">31,904</div><div class="abs" style="left:1300px;top:132.5px;width:3px;height:940px;background:#e0e0e0"></div><div class="abs" style="left:1303px;top:132.5px;width:610px;height:940px;background:#fff"></div><div class="t" style="left:1345px;top:174.90px;font-family:'Liberation Sans','DejaVu Sans',sans-serif;font-size:27px;font-weight:700;color:#0a0a0a;letter-spacing:0.92px;">Configure connected table</div><svg style="left:1847px;top:176px;" width="24" height="24" viewBox="0 0 24 24" fill="none"><path d="M2.800 2.600l19.300 19.300M22.100 2.600L2.800 21.900" stroke="#111" stroke-width="2.100" stroke-linecap="round"/></svg><div class="abs" style="left:1345px;top:244px;width:528px;height:91px;border:1.3px solid #e4e4e4;border-radius:4px;background:#fafafa"></div><div class="t" style="left:1359.5px;top:284.70px;font-family:'Liberation Sans','DejaVu Sans',sans-serif;font-size:9.8px;font-weight:400;color:#e2231a;letter-spacing:0.1px;transform:scaleX(1.27);transform-origin:left center;-webkit-text-stroke:0.3px #e2231a">ORACLE</div><div class="t" style="left:1426px;top:264.50px;font-family:'Liberation Sans','DejaVu Sans',sans-serif;font-size:23px;font-weight:400;color:#3a3a3a;letter-spacing:0.92px;-webkit-text-stroke:0.3px #3a3a3a">Oracle Connection</div><div class="abs" style="left:1426px;top:300.4px;width:14px;height:14px;border-radius:7px;background:#5cb85c"></div><div class="t" style="left:1447.5px;top:297.55px;font-family:'Liberation Sans','DejaVu Sans',sans-serif;font-size:19.5px;font-weight:400;color:#3a3a3a;letter-spacing:0.75px;">Connected</div><svg style="left:1757px;top:284px;" width="28" height="12" viewBox="0 0 28 12" fill="none"><circle cx="4.800" cy="5.600" r="2.850" fill="#444"/><circle cx="13.500" cy="5.600" r="2.850" fill="#444"/><circle cx="22.200" cy="5.600" r="2.850" fill="#444"/></svg><svg style="left:1814px;top:272px;" width="32" height="34" viewBox="0 0 32 34" fill="none"><g stroke="#444" fill="none"><rect x="3.400" y="5.800" width="26" height="26.200" rx="2" stroke-width="2.800"/><path d="M3.400 8.600h26" stroke-width="6.400"/><path d="M7.700 1.600v5M25.300 1.600v5" stroke-width="2.800"/></g></svg><div class="t" style="left:1345px;top:373.40px;font-family:'Liberation Sans','DejaVu Sans',sans-serif;font-size:20.8px;font-weight:400;color:#111;letter-spacing:1.1px;-webkit-text-stroke:0.4px #111">Query</div><svg style="left:1674px;top:370px;" width="14" height="14" viewBox="0 0 14 14" fill="none"><path d="M7 .8v12.400M.800 7h12.400" stroke="#111" stroke-width="1.600"/></svg><div class="t" style="left:1703px;top:366.60px;font-family:'Liberation Sans','DejaVu Sans',sans-serif;font-size:20.8px;font-weight:400;color:#111;letter-spacing:0.95px;-webkit-text-stroke:0.4px #111">Create variable</div><div class="abs" style="left:1345px;top:405.2px;width:528px;height:630.8px;border:1.3px solid #e2e2e2;border-radius:5px;background:#fff"></div><div class="abs" style="left:1403.600px;top:407px;width:1.3px;height:348px;background:#e6e6e6"></div><div class="abs" style="left:1346.300px;top:413.400px;width:57.400px;height:31px;background:#e3f1fc"></div><div class="abs" style="left:1405px;top:413.400px;width:466.700px;height:31px;background:#f5fafe"></div><div class="abs" style="left:1414.600px;top:413.400px;width:382.600px;height:31px;background:#d3dbe2;border-radius:2px"></div><div class="t" style="left:976px;width:800px;text-align:center;top:418.75px;font-family:'DejaVu Sans Mono','Liberation Mono',monospace;font-size:22.5px;font-weight:400;color:#111;letter-spacing:0px;">1</div><div class="t" style="left:1415.800px;top:419.09999999999997px;font-family:'DejaVu Sans Mono','Liberation Mono',monospace;font-size:22.5px;letter-spacing:0.02px"><span style="color:#8b1a9b">select</span><span style="color:#222"> * </span><span style="color:#8b1a9b">from</span> <span style="color:#e0450c">"rz_babynames"</span></div><div class="abs" style="left:1346.300px;top:754.600px;width:525.400px;height:71.800px;background:#fafafa;border-top:1.3px solid #e2e2e2;border-bottom:1.3px solid #e2e2e2"></div><div class="t" style="left:1367px;top:780.60px;font-family:'Liberation Sans','DejaVu Sans',sans-serif;font-size:20.8px;font-weight:400;color:#111;letter-spacing:0.95px;-webkit-text-stroke:0.3px #111">Console</div><div class="abs" style="left:1637px;top:771px;width:88px;height:41.600px;border-radius:5px;background:#ededed"></div><svg style="left:1653px;top:785px;" width="12" height="16" viewBox="0 0 12 16" fill="none"><path d="M1.500 1.200l9 6.300-9 6.300z" fill="#111"/></svg><div class="t" style="left:1675px;top:781.30px;font-family:'Liberation Sans','DejaVu Sans',sans-serif;font-size:20.6px;font-weight:400;color:#111;letter-spacing:0.8px;-webkit-text-stroke:0.4px #111">Run</div><div class="abs" style="left:1739px;top:771px;width:119px;height:41.600px;border-radius:5px;background:#ededed"></div><svg style="left:1752px;top:787px;" width="18" height="12" viewBox="0 0 18 12" fill="none"><path d="M1 1l7 5-7 5zM9 1l7 5-7 5z" fill="#111"/></svg><div class="t" style="left:1777px;top:781.30px;font-family:'Liberation Sans','DejaVu Sans',sans-serif;font-size:20.6px;font-weight:400;color:#111;letter-spacing:0.8px;-webkit-text-stroke:0.4px #111">Run All</div><div class="t" style="left:1367px;top:848px;font-family:'DejaVu Sans Mono','Liberation Mono',monospace;font-size:22.6px;line-height:32.3px;color:#111;letter-spacing:0.02px">Complete: imported 2,148,744 rows
in 7 seconds</div>
</body></html>
